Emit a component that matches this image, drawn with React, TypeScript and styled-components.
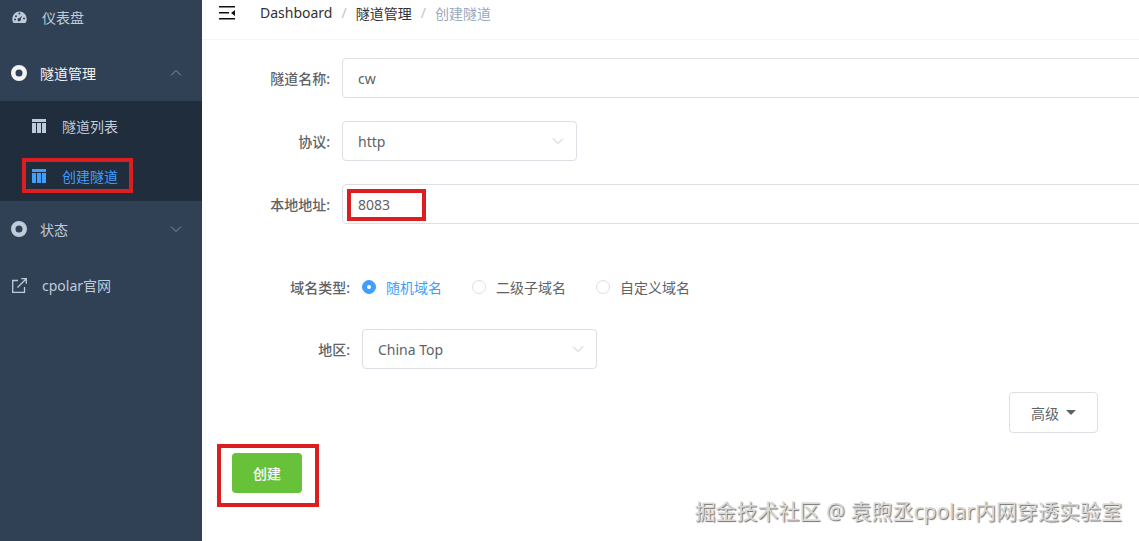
import React from 'react';
import styled, { createGlobalStyle } from 'styled-components';

const FONT = '"Noto Sans", "Noto Sans CJK SC", sans-serif';

const GlobalStyle = createGlobalStyle`
  html, body {
    margin: 0;
    height: 100%;
    background: #fff;
  }
  body {
    font-family: ${FONT};
    font-size: 14px;
  }
  * {
    box-sizing: border-box;
  }
`;

const Page = styled.div`
  position: relative;
  display: flex;
  width: 100%;
  height: 541px;
  overflow: hidden;
`;

const Sidebar = styled.aside`
  flex: 0 0 202px;
  background: #304156;
  color: #bfcbd9;
`;

const MenuItem = styled.div<{ $first?: boolean; $open?: boolean; $indent?: number }>`
  display: flex;
  align-items: center;
  height: ${(p) => (p.$first ? '34px' : '56px')};
  margin-bottom: ${(p) => (p.$first ? '11px' : '0')};
  padding-left: ${(p) => p.$indent ?? 11}px;
  color: ${(p) => (p.$open ? '#f4f4f5' : '#bfcbd9')};
`;

const MenuText = styled.span<{ $gap: number }>`
  margin-left: ${(p) => p.$gap}px;
  flex: 1;
`;

const MenuArrow = styled.svg`
  width: 12px;
  height: 8px;
  margin-right: 20px;
  fill: none;
  stroke: #8493a5;
  stroke-width: 1;
`;

const SubMenu = styled.div`
  background: #1f2d3d;
  height: 100px;
`;

const SubItem = styled.div<{ $active?: boolean }>`
  display: flex;
  align-items: center;
  height: 50px;
  padding-left: 32px;
  color: ${(p) => (p.$active ? '#409eff' : '#bfcbd9')};
`;

const SubText = styled.span`
  margin-left: 16px;
`;

const Main = styled.main`
  flex: 1;
  min-width: 0;
  display: flex;
  flex-direction: column;
`;

const Header = styled.header`
  display: flex;
  height: 40px;
  padding: 0 0 14px 17px;
  align-items: center;
  border-bottom: 1px solid #f4f5f6;
`;

const Hamburger = styled.svg`
  width: 16px;
  height: 14px;
  margin-right: 25px;
  fill: #111;
`;

const Crumb = styled.span<{ $muted?: boolean }>`
  color: ${(p) => (p.$muted ? '#97a8be' : '#303133')};
`;

const Slash = styled.span`
  margin: 0 9px;
  color: #c0c4cc;
`;

const Form = styled.form`
  display: flex;
  flex-direction: column;
  padding: 18px 0 0 30px;
`;

const Row = styled.div<{ $bottom: number }>`
  display: flex;
  align-items: center;
  height: 40px;
  margin-bottom: ${(p) => p.$bottom}px;
`;

const Label = styled.label<{ $width: number }>`
  flex: 0 0 ${(p) => p.$width}px;
  padding-right: 12px;
  text-align: right;
  font-weight: 500;
  color: #606266;
`;

const TextInput = styled.input`
  flex: 1;
  min-width: 0;
  height: 40px;
  margin-right: -8px;
  padding: 0 15px;
  border: 1px solid #dcdfe6;
  border-radius: 4px;
  outline: none;
  color: #606266;
  font: 14px ${FONT};
`;

const SelectBox = styled.div`
  display: flex;
  align-items: center;
  justify-content: space-between;
  width: 235px;
  height: 40px;
  padding: 0 12px 0 15px;
  border: 1px solid #dcdfe6;
  border-radius: 4px;
  color: #606266;
`;

const SelectArrow = styled.svg`
  width: 12px;
  height: 8px;
  fill: none;
  stroke: #c0c4cc;
  stroke-width: 1;
`;

const RadioGroup = styled.div`
  display: flex;
  gap: 30px;
`;

const Radio = styled.span<{ $checked?: boolean }>`
  display: flex;
  align-items: center;
  gap: 10px;
  color: ${(p) => (p.$checked ? '#409eff' : '#606266')};
`;

const RadioDot = styled.span<{ $checked?: boolean }>`
  display: flex;
  align-items: center;
  justify-content: center;
  width: 14px;
  height: 14px;
  border-radius: 50%;
  border: 1px solid ${(p) => (p.$checked ? '#409eff' : '#dcdfe6')};
  background: ${(p) => (p.$checked ? '#409eff' : '#fff')};
  &::after {
    content: '';
    width: 4px;
    height: 4px;
    border-radius: 50%;
    background: #fff;
  }
`;

const AdvancedRow = styled.div`
  display: flex;
  justify-content: flex-end;
  padding-right: 41px;
  margin-bottom: 20px;
`;

const AdvancedButton = styled.button`
  display: flex;
  align-items: center;
  justify-content: center;
  gap: 7px;
  width: 89px;
  height: 41px;
  padding: 0;
  background: #fff;
  border: 1px solid #dcdfe6;
  border-radius: 4px;
  color: #606266;
  font: 14px ${FONT};
`;

const Caret = styled.span`
  width: 0;
  height: 0;
  border-left: 5px solid transparent;
  border-right: 5px solid transparent;
  border-top: 5px solid #606266;
`;

const CreateButton = styled.button`
  align-self: flex-start;
  width: 70px;
  height: 40px;
  padding: 0;
  border: 0;
  border-radius: 4px;
  background: #67c23a;
  color: #fff;
  font: 500 14px ${FONT};
`;

// red annotation frames drawn over the screenshot
const Mark = styled.div<{ $x: number; $y: number; $w: number; $h: number }>`
  position: absolute;
  left: ${(p) => p.$x}px;
  top: ${(p) => p.$y}px;
  width: ${(p) => p.$w}px;
  height: ${(p) => p.$h}px;
  border: 4px solid #db1f20;
  pointer-events: none;
`;

const Watermark = styled.div`
  position: absolute;
  right: 17px;
  bottom: 15px;
  font-size: 21px;
  line-height: 29px;
  white-space: nowrap;
  color: #d8d8d8;
  text-shadow: 1px 1px 1px #6f6f6f;
`;

const GaugeIcon = () => (
  <svg width="15" height="13" viewBox="0 0 15 13">
    <path
      fill="#bfcbd9"
      fillRule="evenodd"
      d="M7.5 0.5a7.2 7.2 0 0 1 7.2 7.4c0 1.6-.5 3-1.3 4.1H1.6C.8 10.9.3 9.500.3 7.900A7.200 7.200 0 0 1 7.500.500zM6.400 2.600a1 1 0 1 0 2 0 1 1 0 0 0-2 0zM3 5.200a1 1 0 1 0 2 0 1 1 0 0 0-2 0zM10.200 4.600L7.500 7a1.700 1.700 0 1 0 1.300 1.100zM11 7.600a1 1 0 1 0 2 0 1 1 0 0 0-2 0zM2 8.600a1 1 0 1 0 2 0 1 1 0 0 0-2 0z"
    />
  </svg>
);

const RingIcon = ({ color }: { color: string }) => (
  <svg width="16" height="16" viewBox="0 0 16 16">
    <path
      fill={color}
      fillRule="evenodd"
      d="M8 0a8 8 0 1 1 0 16A8 8 0 0 1 8 0zm0 4.500a3.500 3.500 0 1 0 0 7 3.500 3.500 0 0 0 0-7z"
    />
  </svg>
);

const TableIcon = ({ color }: { color: string }) => (
  <svg width="14" height="14" viewBox="0 0 14 14">
    <path
      fill={color}
      d="M0 0h14v3H0zM0 4h4v10H0zM5 4h4v10H5zM10 4h4v10h-4z"
    />
  </svg>
);

const LinkIcon = () => (
  <svg width="15" height="15" viewBox="0 0 15 15" fill="none" stroke="#bfcbd9" strokeWidth="1.300">
    <path d="M6 2.500H.700v11.800h11.800V9" />
    <path d="M5.500 9.500L13.800 1.200M9.300.700h5v5" />
  </svg>
);

const ChevronDown = () => (
  <SelectArrow viewBox="0 0 12 8">
    <path d="M1 1.500l5 5 5-5" />
  </SelectArrow>
);

export default function App() {
  return (
    <Page>
      <GlobalStyle />
      <Sidebar>
        <MenuItem $first $indent={12}>
          <GaugeIcon />
          <MenuText $gap={15}>仪表盘</MenuText>
        </MenuItem>
        <MenuItem $open>
          <RingIcon color="#f4f4f5" />
          <MenuText $gap={13}>隧道管理</MenuText>
          <MenuArrow viewBox="0 0 12 8">
            <path d="M1 6.500l5-5 5 5" />
          </MenuArrow>
        </MenuItem>
        <SubMenu>
          <SubItem>
            <TableIcon color="#bfcbd9" />
            <SubText>隧道列表</SubText>
          </SubItem>
          <SubItem $active>
            <TableIcon color="#409eff" />
            <SubText>创建隧道</SubText>
          </SubItem>
        </SubMenu>
        <MenuItem>
          <RingIcon color="#bfcbd9" />
          <MenuText $gap={13}>状态</MenuText>
          <MenuArrow viewBox="0 0 12 8">
            <path d="M1 1.500l5 5 5-5" />
          </MenuArrow>
        </MenuItem>
        <MenuItem $indent={12}>
          <LinkIcon />
          <MenuText $gap={15}>cpolar官网</MenuText>
        </MenuItem>
      </Sidebar>
      <Main>
        <Header>
          <Hamburger viewBox="0 0 16 14">
            <path d="M0 0h16v1.500H0zM0 6h10v1.500H0zM0 12h16v1.500H0zM16 4v6l-4-3z" />
          </Hamburger>
          <Crumb>Dashboard</Crumb>
          <Slash>/</Slash>
          <Crumb>隧道管理</Crumb>
          <Slash>/</Slash>
          <Crumb $muted>创建隧道</Crumb>
        </Header>
        <Form>
          <Row $bottom={23}>
            <Label $width={110}>隧道名称:</Label>
            <TextInput defaultValue="cw" readOnly />
          </Row>
          <Row $bottom={23}>
            <Label $width={110}>协议:</Label>
            <SelectBox>
              http
              <ChevronDown />
            </SelectBox>
          </Row>
          <Row $bottom={43}>
            <Label $width={110}>本地地址:</Label>
            <TextInput defaultValue="8083" readOnly />
          </Row>
          <Row $bottom={22}>
            <Label $width={130}>域名类型:</Label>
            <RadioGroup>
              <Radio $checked>
                <RadioDot $checked />
                随机域名
              </Radio>
              <Radio>
                <RadioDot />
                二级子域名
              </Radio>
              <Radio>
                <RadioDot />
                自定义域名
              </Radio>
            </RadioGroup>
          </Row>
          <Row $bottom={23}>
            <Label $width={130}>地区:</Label>
            <SelectBox>
              China Top
              <ChevronDown />
            </SelectBox>
          </Row>
          <AdvancedRow>
            <AdvancedButton type="button">
              高级
              <Caret />
            </AdvancedButton>
          </AdvancedRow>
          <CreateButton type="button">创建</CreateButton>
        </Form>
      </Main>
      <Mark $x={22} $y={158} $w={111} $h={35} />
      <Mark $x={347} $y={189} $w={79} $h={32} />
      <Mark $x={217} $y={444} $w={102} $h={63} />
      <Watermark>掘金技术社区 @ 袁煦丞cpolar内网穿透实验室</Watermark>
    </Page>
  );
}
